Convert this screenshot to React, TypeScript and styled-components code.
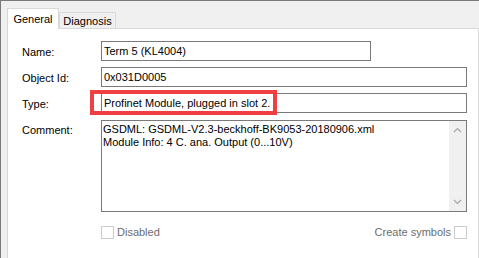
import styled, { createGlobalStyle } from "styled-components";

const GlobalStyle = createGlobalStyle`
  html, body {
    margin: 0;
    padding: 0;
    background: #f0f0f0;
  }
  body {
    font-family: "Liberation Sans", Arial, sans-serif;
    font-size: 11px;
    color: #000;
  }
`;

const Window = styled.div`
  position: relative;
  box-sizing: border-box;
  width: 479px;
  height: 258px;
  overflow: hidden;
  background: #f0f0f0;
  border-top: 1px solid #7a7a7a;
  border-left: 1px solid #7a7a7a;
  display: flex;
  flex-direction: column;
`;

const TabStrip = styled.div`
  display: flex;
  align-items: flex-end;
  height: 27px;
  padding-left: 6px;
`;

const Tab = styled.div<{ $active?: boolean }>`
  position: relative;
  z-index: ${(p) => (p.$active ? 1 : 0)};
  box-sizing: border-box;
  display: flex;
  align-items: center;
  justify-content: center;
  width: ${(p) => (p.$active ? "52px" : "57px")};
  height: ${(p) => (p.$active ? "21px" : "16px")};
  margin-bottom: ${(p) => (p.$active ? "-1px" : "0")};
  background: ${(p) => (p.$active ? "#fff" : "#f0f0f0")};
  border: 1px solid #d9d9d9;
  border-bottom: none;
  padding-top: ${(p) => (p.$active ? "0" : "1px")};
`;

const Panel = styled.div`
  flex: 1;
  box-sizing: border-box;
  width: 472px;
  margin-left: 6px;
  background: #fff;
  border: 1px solid #d9d9d9;
  border-bottom: none;
  padding: 12px 11px 0 14px;
`;

const Form = styled.div`
  display: grid;
  grid-template-columns: 79px 1fr;
  row-gap: 6px;
  align-items: start;
`;

const Label = styled.div`
  height: 20px;
  line-height: 22px;
  white-space: nowrap;
`;

const Field = styled.div<{ $width?: number }>`
  box-sizing: border-box;
  width: ${(p) => (p.$width ? `${p.$width}px` : "100%")};
  height: 20px;
  border: 1px solid #7a7a7a;
  padding: 0 2px;
  line-height: 18px;
  white-space: nowrap;
  overflow: hidden;
`;

const CommentBox = styled.div`
  box-sizing: border-box;
  height: 92px;
  margin-top: 1px;
  border: 1px solid #7a7a7a;
  display: flex;
`;

const CommentText = styled.div`
  flex: 1;
  padding: 2px 1px;
  line-height: 13px;
  white-space: nowrap;
  overflow: hidden;
`;

const ScrollBar = styled.div`
  width: 17px;
  background: #f0f0f0;
  display: flex;
  flex-direction: column;
  justify-content: space-between;
  align-items: center;
  padding: 6px 0;
`;

const OptionsRow = styled.div`
  grid-column: 2;
  display: flex;
  justify-content: space-between;
  align-items: center;
  margin-top: 7px;
  height: 14px;
`;

const Option = styled.div`
  display: flex;
  align-items: center;
  gap: 3px;
  color: #6d6d6d;
`;

const Check = styled.span`
  box-sizing: border-box;
  width: 13px;
  height: 13px;
  border: 1px solid #cccccc;
  background: #fff;
`;

const Annotation = styled.div`
  position: absolute;
  left: 89px;
  top: 89px;
  box-sizing: border-box;
  width: 187px;
  height: 25px;
  border: 4px solid #ef3f42;
  pointer-events: none;
`;

const Chevron = ({ up }: { up?: boolean }) => (
  <svg width="9" height="6" viewBox="0 0 9 6">
    <path
      d={up ? "M1 5 L4.5 1.5 L8 5" : "M1 1 L4.5 4.5 L8 1"}
      fill="none"
      stroke="#a6a6a6"
      strokeWidth="1.2"
    />
  </svg>
);

export default function App() {
  return (
    <>
      <GlobalStyle />
      <Window>
        <TabStrip>
          <Tab $active>General</Tab>
          <Tab>Diagnosis</Tab>
        </TabStrip>
        <Panel>
          <Form>
            <Label>Name:</Label>
            <Field $width={270}>Term 5 (KL4004)</Field>
            <Label>Object Id:</Label>
            <Field>0x031D0005</Field>
            <Label>Type:</Label>
            <Field>Profinet Module, plugged in slot 2.</Field>
            <Label>Comment:</Label>
            <CommentBox>
              <CommentText>
                GSDML: GSDML-V2.3-beckhoff-BK9053-20180906.xml
                <br />
                Module Info: 4 C. ana. Output (0...10V)
              </CommentText>
              <ScrollBar>
                <Chevron up />
                <Chevron />
              </ScrollBar>
            </CommentBox>
            <OptionsRow>
              <Option>
                <Check />
                Disabled
              </Option>
              <Option>
                Create symbols
                <Check />
              </Option>
            </OptionsRow>
          </Form>
        </Panel>
        <Annotation />
      </Window>
    </>
  );
}
